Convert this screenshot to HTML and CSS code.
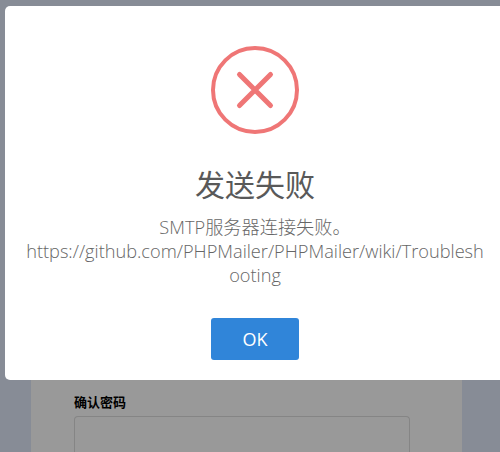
FILE: index.html
```html
<!DOCTYPE html>
<html lang="zh">
<head>
<meta charset="utf-8">
<title>发送失败</title>
<link rel="stylesheet" href="styles.css">
</head>
<body>
<main class="page">
  <form class="card">
    <label class="field-label">确认密码</label>
    <div class="field-input"></div>
  </form>
</main>
<div class="modal">
  <svg class="icon" width="88" height="88" viewBox="0 0 88 88" fill="none" stroke="#ef7676">
    <circle cx="44" cy="44" r="42" stroke-width="4"/>
    <path d="M28.5 28.5 L59.5 59.5 M59.5 28.5 L28.5 59.5" stroke-width="5" stroke-linecap="round"/>
  </svg>
  <h2 class="title">发送失败</h2>
  <p class="message">SMTP服务器连接失败。<br>https://github.com/PHPMailer/PHPMailer/wiki/Troubleshooting</p>
  <button class="ok" type="button">OK</button>
</div>
</body>
</html>
```
FILE: styles.css
```css
html, body {
  margin: 0;
  height: 100%;
  overflow: hidden;
}
body {
  background: #878c96;
  padding-top: 20px;
  box-sizing: border-box;
}
.page {
  width: 431px;
  height: 432px;
  margin-left: 31px;
  background: #999;
  box-sizing: border-box;
  padding: 372px 52px 0 43px;
}
.field-label {
  display: block;
  font-size: 13px;
  line-height: 20px;
  font-weight: 700;
  color: #000;
  font-family: "Noto Sans CJK SC", sans-serif;
}
.field-input {
  box-sizing: border-box;
  margin-top: 4px;
  height: 36px;
  border: 1px solid #858585;
  border-bottom: 0;
  border-radius: 4px 4px 0 0;
}
.modal {
  position: absolute;
  left: 5px;
  top: 6px;
  width: 500px;
  height: 374px;
  background: #fff;
  border-radius: 5px;
  box-sizing: border-box;
  padding: 40px 20px 0;
  text-align: center;
  font-family: "Open Sans", "Noto Sans CJK SC", sans-serif;
}
.icon {
  display: block;
  margin: 0 auto;
}
.title {
  margin: 29px 0 0;
  font-size: 30px;
  line-height: 40px;
  font-weight: 400;
  color: #595959;
  font-family: "Noto Sans CJK SC", sans-serif;
}
.message {
  margin: 12px 0 0;
  font-size: 18.2px;
  line-height: 24px;
  font-weight: 300;
  color: #666;
  word-break: break-all;
}
.ok {
  display: block;
  margin: 31px auto 0;
  width: 88px;
  height: 42px;
  border: 0;
  border-radius: 3px;
  background: #3085d9;
  color: #fff;
  font-family: "Open Sans", sans-serif;
  font-size: 18px;
}
```
